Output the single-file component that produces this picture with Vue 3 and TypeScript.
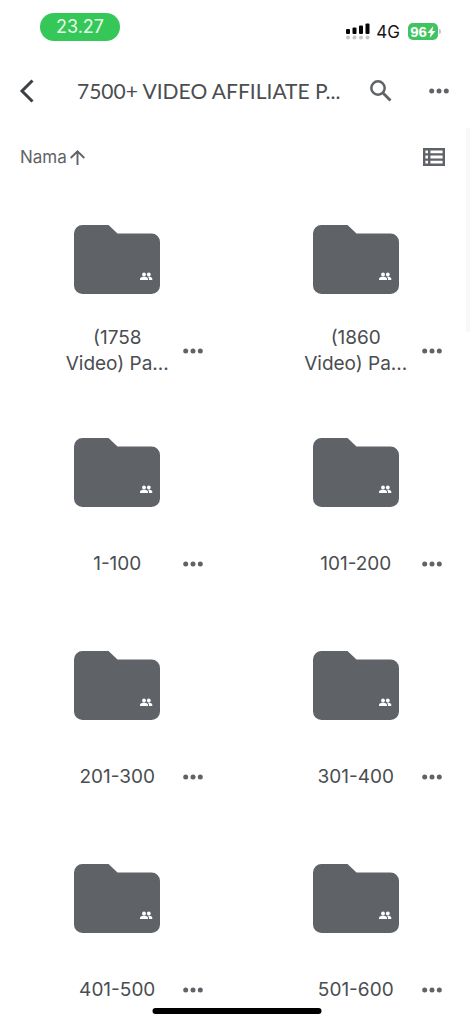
<script setup lang="ts">
interface Folder {
  id: number
  name: string
}

const folders: Folder[] = [
  '(1758 Video) Pa...',
  '(1860 Video) Pa...',
  '1-100',
  '101-200',
  '201-300',
  '301-400',
  '401-500',
  '501-600',
].map((name, id) => ({ id, name }))
</script>

<template>
  <div class="screen">
    <div class="status">
      <span class="clock">23.27</span>
      <div class="status-right">
        <svg class="signal" width="24" height="17" viewBox="0 0 24 17" aria-hidden="true">
          <g fill="#050505">
            <rect x="0" y="6" width="4" height="5" rx="1" />
            <rect x="6.5" y="4.5" width="4" height="6.5" rx="1" />
            <rect x="13" y="2.5" width="4" height="8.5" rx="1" />
            <rect x="19.5" y="0.5" width="4" height="10.5" rx="1" />
          </g>
          <g fill="#c6c6c6">
            <circle cx="2" cy="14.5" r="2" />
            <circle cx="8.5" cy="14.5" r="2" />
            <circle cx="15" cy="14.5" r="2" />
            <circle cx="21.5" cy="14.5" r="2" />
          </g>
        </svg>
        <span class="network">4G</span>
        <span class="battery">
          <span class="charge">96<svg width="9" height="12" viewBox="0 0 8 12" aria-hidden="true">
            <path d="M5.8 0 0 6.9H3.2L2.2 12 8 5H4.8Z" fill="#fff" />
          </svg></span>
          <span class="nub"></span>
        </span>
      </div>
    </div>

    <header class="appbar">
      <button class="icon-btn" type="button" aria-label="Kembali">
        <svg width="16" height="26" viewBox="0 0 16 26" fill="none" stroke="#3c3f43" stroke-width="3">
          <path d="M13.5 2.5 3 13 13.5 23.5" />
        </svg>
      </button>
      <h1>7500+ VIDEO AFFILIATE P...</h1>
      <button class="icon-btn search" type="button" aria-label="Telusuri">
        <svg width="22" height="22" viewBox="0 0 22 22" fill="none" stroke="#5f6368">
          <circle cx="8" cy="8" r="6.7" stroke-width="2.5" />
          <path d="M13 13 20.5 20.5" stroke-width="2.9" />
        </svg>
      </button>
      <button class="icon-btn more" type="button" aria-label="Opsi lainnya">
        <svg width="20" height="6" viewBox="0 0 20 6" fill="#5f6368">
          <circle cx="2.7" cy="3" r="2.5" /><circle cx="10" cy="3" r="2.5" /><circle cx="17.3" cy="3" r="2.5" />
        </svg>
      </button>
    </header>

    <div class="sortbar">
      <button class="sort" type="button">
        Nama
        <svg width="15" height="15" viewBox="0 0 15 15" fill="none" stroke="#5f6368" stroke-width="1.9" aria-hidden="true">
          <path d="M7.5 15V1.5M0.7 8 7.5 1.3 14.3 8" />
        </svg>
      </button>
      <button class="icon-btn" type="button" aria-label="Tampilan daftar">
        <svg width="22" height="18" viewBox="0 0 22 18" fill="none" stroke="#5f6368" stroke-width="2.4">
          <path d="M1.2 1.2H20.8V16.8H1.2ZM1 6.4H21M1 11.6H21M6.200 1V17" />
        </svg>
      </button>
    </div>

    <main class="grid">
      <article v-for="folder in folders" :key="folder.id" class="tile">
        <svg class="folder" width="86" height="69" viewBox="0 0 86 69" aria-hidden="true">
          <path
            fill="#5f6368"
            d="M8.5 0H34.5L43.5 8.5H77.5A8.5 8.5 0 0 1 86 17V60.5A8.5 8.5 0 0 1 77.5 69H8.5A8.5 8.5 0 0 1 0 60.5V8.5A8.5 8.5 0 0 1 8.5 0Z"
          />
          <g fill="#fff">
            <circle cx="70" cy="49.5" r="1.9" />
            <circle cx="74.8" cy="49.5" r="1.9" />
            <path d="M66 55V53.8C66 52.2 68.5 51.8 70 51.8S74 52.2 74 53.8V55Z" />
            <path d="M75 55V53.8C75 53 74.6 52.3 74 51.9 75.5 51.7 78.3 52.2 78.3 53.8V55Z" />
          </g>
        </svg>
        <h2>{{ folder.name }}</h2>
        <button class="tile-more" type="button" :aria-label="`Opsi untuk ${folder.name}`">
          <svg width="20" height="6" viewBox="0 0 20 6" fill="#5f6368">
            <circle cx="2.7" cy="3" r="2.5" /><circle cx="10" cy="3" r="2.5" /><circle cx="17.3" cy="3" r="2.5" />
          </svg>
        </button>
      </article>
    </main>

    <div class="scrollbar"></div>
    <div class="home"></div>
  </div>
</template>

<style>
body {
  margin: 0;
  background: #fff;
}
</style>

<style scoped>
.screen {
  position: relative;
  background: #fff;
  color: #4a4d51;
  font-family: Inter, 'Liberation Sans', sans-serif;
}

button {
  padding: 0;
  border: 0;
  background: none;
  color: inherit;
  font: inherit;
  cursor: pointer;
}

.status {
  display: flex;
  justify-content: space-between;
  align-items: flex-start;
  height: 49px;
  padding: 13px 32px 0 40px;
}

.clock {
  width: 80px;
  border-radius: 14px;
  background: #36c759;
  color: #e6fbe9;
  font-size: 18px;
  line-height: 28px;
  text-align: center;
}

.status-right {
  display: flex;
  align-items: center;
  height: 37px;
}

.signal {
  margin-right: 6px;
}

.network {
  margin-right: 8px;
  color: #161616;
  font-size: 17px;
  line-height: 20px;
}

.battery {
  display: flex;
  align-items: center;
  gap: 1px;
}

.charge {
  display: flex;
  align-items: center;
  justify-content: center;
  width: 30px;
  height: 17px;
  border-radius: 5px;
  background: #3fc45f;
  color: #fff;
  font-family: 'Liberation Sans', sans-serif;
  font-size: 15px;
  font-weight: 700;
}

.nub {
  width: 2px;
  height: 5px;
  border-radius: 0 2px 2px 0;
  background: #c2c8c3;
}

.appbar {
  display: flex;
  align-items: center;
  height: 58px;
  padding: 0 14px 0 8px;
}

.icon-btn {
  display: flex;
  flex: none;
  align-items: center;
  justify-content: center;
  width: 38px;
  height: 40px;
}

.search {
  width: 48px;
}

.more {
  width: 40px;
  margin-left: 14px;
}

h1 {
  flex: 1;
  min-width: 0;
  margin: 0 0 0 31px;
  overflow: hidden;
  font-family: Lato, Inter, sans-serif;
  font-size: 21px;
  font-weight: 400;
  line-height: 28px;
  white-space: nowrap;
}

.sortbar {
  display: flex;
  align-items: center;
  justify-content: space-between;
  height: 74px;
  padding: 0 20px;
}

.sort {
  display: flex;
  align-items: center;
  gap: 3px;
  color: #5f6368;
  font-size: 17px;
  line-height: 24px;
}

.grid {
  display: grid;
  grid-template-columns: 1fr 1fr;
  gap: 61px 4px;
  padding-top: 31px;
}

.tile {
  display: grid;
  grid-template-columns: 1fr 104px 1fr;
  grid-template-rows: auto 52px;
  row-gap: 31px;
  align-items: center;
}

.folder {
  display: block;
  grid-column: 1 / -1;
  justify-self: center;
}

h2 {
  grid-column: 2;
  margin: 0;
  font-size: 19px;
  font-weight: 400;
  line-height: 26px;
  text-align: center;
}

.tile-more {
  display: flex;
  align-items: center;
  justify-content: center;
  width: 48px;
  height: 48px;
}

.scrollbar {
  position: absolute;
  top: 128px;
  right: 3px;
  width: 4px;
  height: 204px;
  background: #f8f8f8;
}

.home {
  position: fixed;
  bottom: 10px;
  left: 50%;
  width: 169px;
  height: 6px;
  border-radius: 3px;
  background: #000;
  transform: translateX(-50%);
}
</style>
